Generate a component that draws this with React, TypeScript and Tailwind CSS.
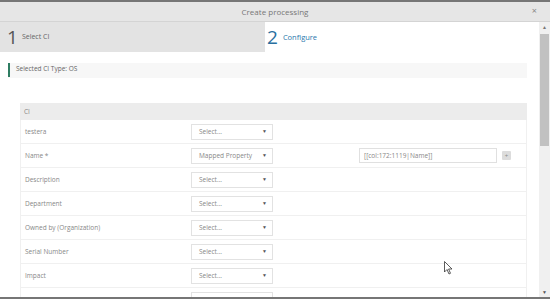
import React from "react";

const rows = [
  { label: "testera", value: "Select..." },
  { label: "Name *", value: "Mapped Property", input: "[[col:172:1119|Name]]" },
  { label: "Description", value: "Select..." },
  { label: "Department", value: "Select..." },
  { label: "Owned by (Organization)", value: "Select..." },
  { label: "Serial Number", value: "Select..." },
  { label: "Impact", value: "Select..." },
  { label: "Status *", value: "Select..." },
];

function SelectBox({ value }: { value: string }) {
  return (
    <div className="w-[82px] h-[16px] border border-[#e2e2e2] bg-white flex items-center justify-between pl-[7px] pr-[5px] text-[6.5px] text-[#888]">
      <span>{value}</span>
      <span className="text-[5px] text-[#555]">▼</span>
    </div>
  );
}

export default function App() {
  return (
    <div
      className="w-[550px] h-[299px] overflow-hidden relative bg-white flex flex-col border-t-2 border-b-2 border-[#767676]"
      style={{ fontFamily: '"Open Sans", "Noto Sans", sans-serif' }}
    >
      <div className="h-[20px] shrink-0 bg-[#e6e6e6] border-b border-[#d4d4d4] relative flex items-center justify-center">
        <span className="text-[8px] text-[#777]">Create processing</span>
        <span className="absolute right-[13px] top-[4px] text-[9px] leading-none text-[#888]">×</span>
      </div>
      <div className="flex flex-1 min-h-0">
        <div className="flex-1 min-w-0 flex flex-col">
          <div className="h-[30px] shrink-0 flex">
            <div className="w-[265px] bg-[#e3e3e3] flex items-center pl-[7px] gap-[4px]">
              <span className="text-[19px] leading-none text-[#555]">1</span>
              <span className="text-[7px] text-[#666] mt-[1px]">Select CI</span>
            </div>
            <div className="flex items-center pl-[2px] gap-[5px]">
              <span className="text-[19px] leading-none text-[#2a6fa0]">2</span>
              <span className="text-[7.5px] text-[#2a78ad] mt-[1px]">Configure</span>
            </div>
          </div>
          <div className="mt-[11px] ml-[8px] mr-[12px] h-[18px] bg-[#f7f7f7] flex items-end pb-[1px]">
            <div className="w-[2px] h-[14px] bg-[#2e7d62]" />
            <span className="ml-[6px] text-[6.5px] text-[#666] mb-[3px]">Selected CI Type: OS</span>
          </div>
          <div className="mt-[25px] ml-[20px] mr-[12px] flex flex-col">
            <div className="h-[17px] bg-[#ececec] flex items-center pl-[4px] text-[6.5px] text-[#888]">CI</div>
            {rows.map((r) => (
              <div key={r.label} className="h-[24px] shrink-0 border-b border-r border-l border-[#f0f0f0] flex items-center relative">
                <span className="w-[170px] pl-[4px] text-[6.5px] text-[#888]">{r.label}</span>
                <SelectBox value={r.value} />
                {r.input && (
                  <div className="ml-[86px] flex items-center">
                    <div className="w-[138px] h-[15px] border border-[#e0e0e0] bg-white flex items-center pl-[4px] text-[6.5px] text-[#888]">
                      {r.input}
                    </div>
                    <div className="ml-[5px] w-[9px] h-[9px] bg-[#dcdcdc] rounded-[1px] flex items-center justify-center text-[6px] leading-none text-[#888]">+</div>
                  </div>
                )}
              </div>
            ))}
          </div>
        </div>
        <div className="w-[11px] shrink-0 bg-[#f0f0f0] flex flex-col items-center">
          <span className="text-[5px] text-[#777] leading-none mt-[3px]">▲</span>
          <div className="w-[9px] h-[112px] bg-[#c1c1c1] mt-[4px]" />
          <div className="flex-1" />
          <span className="text-[5px] text-[#555] leading-none mb-[2px]">▼</span>
        </div>
      </div>
      <svg className="absolute left-[444px] top-[259px]" width="9" height="14" viewBox="0 0 9 14">
        <path d="M0.5 0.5 L0.5 11 L3 8.5 L5 13 L6.5 12.3 L4.6 8 L8 8 Z" fill="#fff" stroke="#333" strokeWidth="0.8" />
      </svg>
    </div>
  );
}
